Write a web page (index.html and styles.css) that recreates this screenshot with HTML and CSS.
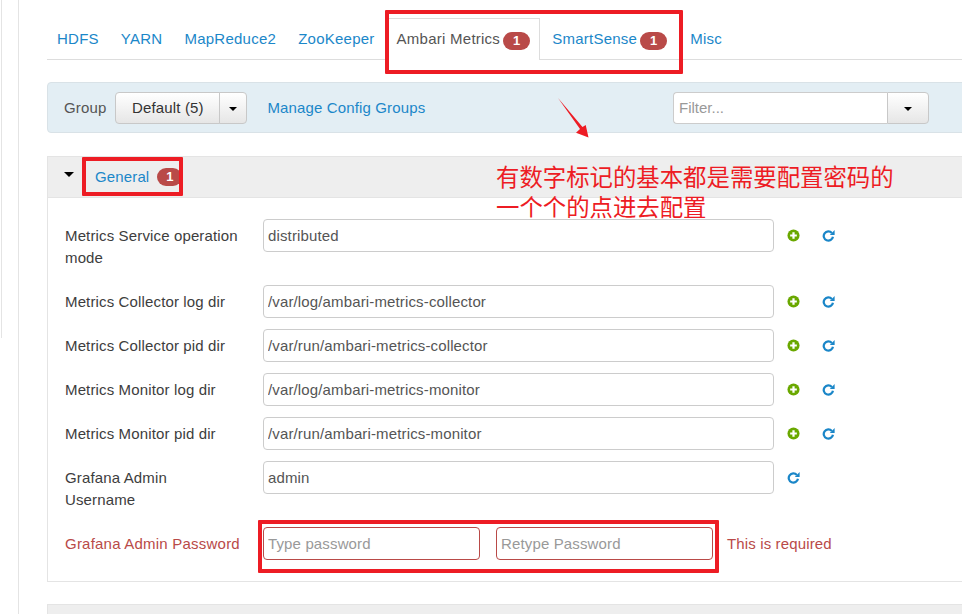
FILE: index.html
```html
<!DOCTYPE html>
<html>
<head>
  <meta charset="utf-8">
  <title>Ambari Metrics config</title>
  <link rel="stylesheet" href="styles.css">
</head>
<body>
  <div class="sidebar-edge"></div>
  <div class="content">
    <ul class="tabs">
      <li><a>HDFS</a></li>
      <li><a>YARN</a></li>
      <li><a>MapReduce2</a></li>
      <li><a>ZooKeeper</a></li>
      <li class="active"><a>Ambari Metrics<span class="badge">1</span></a></li>
      <li><a>SmartSense<span class="badge">1</span></a></li>
      <li class="last"><a>Misc</a></li>
    </ul>

    <div class="toolbar">
      <span class="group-label">Group</span>
      <div class="btn-group">
        <button class="btn btn-main">Default (5)</button>
        <button class="btn btn-caret"><span class="caret"></span></button>
      </div>
      <a class="manage-link">Manage Config Groups</a>
      <div class="filter">
        <input type="text" placeholder="Filter...">
        <button class="btn btn-filter"><span class="caret"></span></button>
      </div>
    </div>

    <div class="panel">
      <div class="panel-head">
        <span class="caret caret-head"></span>
        <a class="panel-title">General</a>
        <span class="badge">1</span>
      </div>
      <div class="panel-body">
        <div class="row">
          <label class="row-label">Metrics Service operation<br>mode</label>
          <input class="field" type="text" value="distributed">
          <svg class="icon icon-add" viewBox="0 0 14 14"><circle cx="7" cy="7" r="6.5" fill="#6aa800"/><path d="M7 3.4v7.2M3.4 7h7.2" stroke="#fff" stroke-width="2.4"/></svg>
          <svg class="icon icon-undo" viewBox="0 0 14 14"><path d="M10.6 4.2A5 5 0 1 0 11.8 8.4" fill="none" stroke="#1a86c8" stroke-width="2.4"/><path d="M8.4 6.4h5.2V1.2z" fill="#1a86c8"/></svg>
        </div>
        <div class="row">
          <label class="row-label">Metrics Collector log dir</label>
          <input class="field" type="text" value="/var/log/ambari-metrics-collector">
          <svg class="icon icon-add" viewBox="0 0 14 14"><circle cx="7" cy="7" r="6.5" fill="#6aa800"/><path d="M7 3.4v7.2M3.4 7h7.2" stroke="#fff" stroke-width="2.4"/></svg>
          <svg class="icon icon-undo" viewBox="0 0 14 14"><path d="M10.6 4.2A5 5 0 1 0 11.8 8.4" fill="none" stroke="#1a86c8" stroke-width="2.4"/><path d="M8.4 6.4h5.2V1.2z" fill="#1a86c8"/></svg>
        </div>
        <div class="row">
          <label class="row-label">Metrics Collector pid dir</label>
          <input class="field" type="text" value="/var/run/ambari-metrics-collector">
          <svg class="icon icon-add" viewBox="0 0 14 14"><circle cx="7" cy="7" r="6.5" fill="#6aa800"/><path d="M7 3.4v7.2M3.4 7h7.2" stroke="#fff" stroke-width="2.4"/></svg>
          <svg class="icon icon-undo" viewBox="0 0 14 14"><path d="M10.6 4.2A5 5 0 1 0 11.8 8.4" fill="none" stroke="#1a86c8" stroke-width="2.4"/><path d="M8.4 6.4h5.2V1.2z" fill="#1a86c8"/></svg>
        </div>
        <div class="row">
          <label class="row-label">Metrics Monitor log dir</label>
          <input class="field" type="text" value="/var/log/ambari-metrics-monitor">
          <svg class="icon icon-add" viewBox="0 0 14 14"><circle cx="7" cy="7" r="6.5" fill="#6aa800"/><path d="M7 3.4v7.2M3.4 7h7.2" stroke="#fff" stroke-width="2.4"/></svg>
          <svg class="icon icon-undo" viewBox="0 0 14 14"><path d="M10.6 4.2A5 5 0 1 0 11.8 8.4" fill="none" stroke="#1a86c8" stroke-width="2.4"/><path d="M8.4 6.4h5.2V1.2z" fill="#1a86c8"/></svg>
        </div>
        <div class="row">
          <label class="row-label">Metrics Monitor pid dir</label>
          <input class="field" type="text" value="/var/run/ambari-metrics-monitor">
          <svg class="icon icon-add" viewBox="0 0 14 14"><circle cx="7" cy="7" r="6.5" fill="#6aa800"/><path d="M7 3.4v7.2M3.4 7h7.2" stroke="#fff" stroke-width="2.4"/></svg>
          <svg class="icon icon-undo" viewBox="0 0 14 14"><path d="M10.6 4.2A5 5 0 1 0 11.8 8.4" fill="none" stroke="#1a86c8" stroke-width="2.4"/><path d="M8.4 6.4h5.2V1.2z" fill="#1a86c8"/></svg>
        </div>
        <div class="row">
          <label class="row-label">Grafana Admin<br>Username</label>
          <input class="field" type="text" value="admin">
          <svg class="icon icon-undo icon-only" viewBox="0 0 14 14"><path d="M10.6 4.2A5 5 0 1 0 11.8 8.4" fill="none" stroke="#1a86c8" stroke-width="2.4"/><path d="M8.4 6.4h5.2V1.2z" fill="#1a86c8"/></svg>
        </div>
        <div class="row row-error">
          <label class="row-label">Grafana Admin Password</label>
          <input class="field field-pass" type="text" placeholder="Type password">
          <input class="field field-pass" type="text" placeholder="Retype Password">
          <span class="help">This is required</span>
        </div>
      </div>
    </div>

    <div class="panel-next"></div>
  </div>

  <!-- red annotations on top of the screenshot -->
  <div class="mark mark-tabs"></div>
  <div class="mark mark-general"></div>
  <div class="mark mark-pass"></div>
  <svg class="arrow" width="32" height="41" viewBox="0 0 32 41"><path d="M0 0 L24.5 29 L27.7 27 L30.5 39.5 L18 34.7 L22 31 Z" fill="#ed1c24"/></svg>
  <div class="note">有数字标记的基本都是需要配置密码的<br>一个个的点进去配置</div>
</body>
</html>
```

FILE: styles.css
```css
body {
  margin: 0;
  height: 614px;
  overflow: hidden;
  position: relative;
  background: white;
  font-family: "Liberation Sans", Arial, sans-serif;
  font-size: 15px;
  letter-spacing: 0.14px;
  color: #3d3d3d;
}

a {
  color: #1b87c9;
}

.sidebar-edge {
  position: absolute;
  top: 0;
  left: 1px;
  width: 17px;
  height: 614px;
  border-right: 1px solid #e4e4e4;
}

.sidebar-edge:before {
  content: "";
  position: absolute;
  top: 0;
  left: 0;
  width: 1px;
  height: 338px;
  background: #e4e4e4;
}

.content {
  margin-left: 47px;
  width: 960px;
}

.tabs {
  list-style: none;
  margin: 0;
  padding: 18px 0 0 0;
  height: 41px;
  display: flex;
  border-bottom: 1px solid #ddd;
  letter-spacing: 0.25px;
}

.tabs li {
  height: 42px;
  box-sizing: border-box;
  padding: 0 10px;
  margin-right: 2px;
  line-height: 42px;
  white-space: nowrap;
}

.tabs li.active {
  background: white;
  border: 1px solid #ddd;
  border-bottom: none;
  line-height: 40px;
  padding: 0 9px;
}

.tabs li.active a {
  color: #555;
}

.tabs li.last {
  padding-left: 11px;
}

.badge {
  display: inline-block;
  background: #b94a48;
  color: white;
  font-size: 13px;
  font-weight: bold;
  letter-spacing: 0;
  line-height: 18px;
  height: 18px;
  width: 27px;
  text-align: center;
  border-radius: 9px;
  margin-left: 3px;
  vertical-align: -1px;
}

.toolbar {
  margin-top: 22px;
  height: 51px;
  box-sizing: border-box;
  background: #e3eef4;
  border: 1px solid #d9e2e7;
  border-radius: 4px 0 0 4px;
  display: flex;
  align-items: center;
  padding-left: 16px;
  padding-right: 77px;
}

.group-label {
  color: #555;
  margin-right: 9px;
}

.btn-group {
  display: flex;
}

.btn {
  height: 32px;
  box-sizing: border-box;
  border: 1px solid #c8c8c8;
  background: linear-gradient(#fff, #e6e6e6);
  font: inherit;
  letter-spacing: inherit;
  color: #333;
  padding: 0;
}

.btn-main {
  width: 105px;
  border-radius: 4px 0 0 4px;
}

.btn-caret {
  width: 28px;
  margin-left: -1px;
  border-radius: 0 4px 4px 0;
}

.caret {
  display: inline-block;
  width: 0;
  height: 0;
  border-top: 4.5px solid #000;
  border-left: 4.5px solid transparent;
  border-right: 4.5px solid transparent;
  vertical-align: middle;
}

.manage-link {
  margin-left: 20px;
}

.filter {
  display: flex;
  margin-left: auto;
}

.filter input {
  width: 214px;
  height: 32px;
  box-sizing: border-box;
  border: 1px solid #ccc;
  border-right: none;
  border-radius: 4px 0 0 4px;
  padding: 0 5px;
  font: inherit;
}

.btn-filter {
  width: 42px;
  border-radius: 0 4px 4px 0;
}

input::placeholder {
  color: #999;
}

.panel {
  margin-top: 23px;
  border: 1px solid #e4e4e4;
  border-right: none;
  height: 426px;
  box-sizing: border-box;
}

.panel-head {
  height: 40px;
  background: #eee;
  border-bottom: 1px solid #e4e4e4;
  display: flex;
  align-items: center;
  padding-left: 16px;
}

.caret-head {
  margin-right: 21px;
  margin-top: -6px;
  border-top-width: 5px;
  border-left-width: 5px;
  border-right-width: 5px;
}

.panel-title {
  margin-right: 8px;
  margin-top: -2px;
}

.panel-head .badge {
  margin-left: 0;
  width: 25px;
}

.panel-body {
  padding: 21px 0 0 17px;
}

.row {
  display: flex;
  align-items: flex-start;
  margin-bottom: 11px;
}

.row-label {
  width: 198px;
  line-height: 22px;
  padding: 6px 0 5px 0;
  box-sizing: border-box;
  flex-shrink: 0;
  white-space: nowrap;
}

.field {
  width: 511px;
  height: 33px;
  box-sizing: border-box;
  border: 1px solid #ccc;
  border-radius: 4px;
  padding: 0 4px;
  font: inherit;
  letter-spacing: inherit;
  color: #555;
}

.icon {
  width: 13px;
  height: 13px;
  margin-top: 10px;
  flex-shrink: 0;
}

.icon-add {
  margin-left: 13px;
}

.icon-undo {
  margin-left: 22px;
}

.icon-undo.icon-only {
  margin-left: 13px;
}

.row-error .row-label {
  color: #b94a48;
  letter-spacing: 0.22px;
}

.field-pass {
  width: 217px;
  border-color: #b94a48;
  margin-right: 16px;
}

.help {
  color: #b94a48;
  line-height: 22px;
  padding-top: 6px;
  margin-left: -2px;
}

.panel-next {
  margin-top: 22px;
  height: 12px;
  background: #eee;
  border: 1px solid #e4e4e4;
}

.mark {
  position: absolute;
  border: 4px solid #ed1c24;
  box-sizing: border-box;
  border-radius: 1px;
}

.mark-tabs {
  left: 385px;
  top: 10px;
  width: 298px;
  height: 64px;
}

.mark-general {
  left: 82px;
  top: 157px;
  width: 101px;
  height: 39px;
}

.mark-pass {
  left: 258px;
  top: 520px;
  width: 461px;
  height: 53px;
}

.arrow {
  position: absolute;
  left: 558px;
  top: 98px;
}

.note {
  position: absolute;
  left: 496px;
  top: 161px;
  font-family: "Noto Sans CJK SC", sans-serif;
  font-size: 23.4px;
  letter-spacing: 0;
  line-height: 30px;
  color: #ed1c24;
  white-space: nowrap;
}
```
